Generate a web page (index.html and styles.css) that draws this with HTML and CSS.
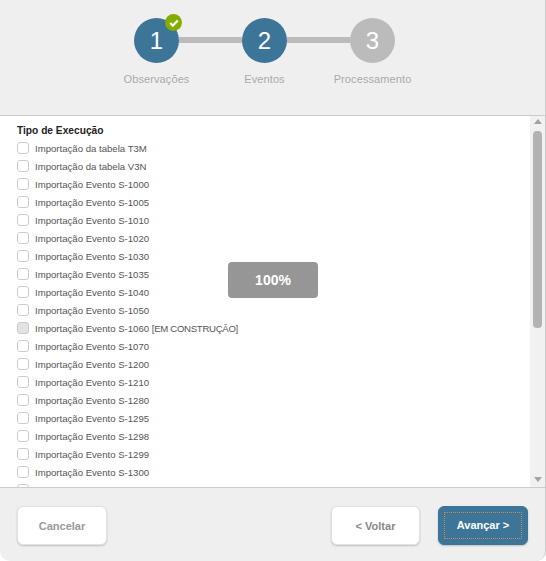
FILE: index.html
```html
<!DOCTYPE html>
<html lang="en">
<head>
    <meta charset="UTF-8">
    <meta name="viewport" content="width=device-width, initial-scale=1.0">
    <title>Tipo de Execução</title>
    <link rel="stylesheet" href="styles.css">
</head>
<body>
    <div class="wizard">
        <div class="steps">
            <div class="step done">
                <div class="circle">1
                    <span class="check">
                        <svg width="10" height="8" viewBox="0 0 10 8"><path d="M1.2 4l2.6 2.6L8.8 1.4" fill="none" stroke="#fff" stroke-width="2.2"/></svg>
                    </span>
                </div>
                <div class="label">Observações</div>
            </div>
            <div class="line"></div>
            <div class="step">
                <div class="circle">2</div>
                <div class="label">Eventos</div>
            </div>
            <div class="line"></div>
            <div class="step off">
                <div class="circle">3</div>
                <div class="label">Processamento</div>
            </div>
        </div>

        <div class="content">
            <div class="list">
                <div class="list-title">Tipo de Execução</div>
                <div class="item"><span class="box"></span>Importação da tabela T3M</div>
                <div class="item"><span class="box"></span>Importação da tabela V3N</div>
                <div class="item"><span class="box"></span>Importação Evento S-1000</div>
                <div class="item"><span class="box"></span>Importação Evento S-1005</div>
                <div class="item"><span class="box"></span>Importação Evento S-1010</div>
                <div class="item"><span class="box"></span>Importação Evento S-1020</div>
                <div class="item"><span class="box"></span>Importação Evento S-1030</div>
                <div class="item"><span class="box"></span>Importação Evento S-1035</div>
                <div class="item"><span class="box"></span>Importação Evento S-1040</div>
                <div class="item"><span class="box"></span>Importação Evento S-1050</div>
                <div class="item"><span class="box disabled"></span>Importação Evento S-1060&nbsp;<span class="note">[EM CONSTRUÇÃO]</span></div>
                <div class="item"><span class="box"></span>Importação Evento S-1070</div>
                <div class="item"><span class="box"></span>Importação Evento S-1200</div>
                <div class="item"><span class="box"></span>Importação Evento S-1210</div>
                <div class="item"><span class="box"></span>Importação Evento S-1280</div>
                <div class="item"><span class="box"></span>Importação Evento S-1295</div>
                <div class="item"><span class="box"></span>Importação Evento S-1298</div>
                <div class="item"><span class="box"></span>Importação Evento S-1299</div>
                <div class="item"><span class="box"></span>Importação Evento S-1300</div>
                <div class="item"><span class="box"></span>Importação Evento S-2190</div>
            </div>
            <div class="scrollbar">
                <span class="arrow up"></span>
                <div class="track"><div class="thumb"></div></div>
                <span class="arrow down"></span>
            </div>
            <div class="progress">100%</div>
        </div>

        <div class="footer">
            <button class="btn">Cancelar</button>
            <div class="footer-right">
                <button class="btn back">&lt; Voltar</button>
                <button class="btn next"><span class="focus">Avançar &gt;</span></button>
            </div>
        </div>
    </div>
</body>
</html>
```

FILE: styles.css
```css
html, body {
    margin: 0;
    padding: 0;
    background-color: #fff;
}
body {
    font-family: "Liberation Sans", Arial, sans-serif;
    width: 546px;
    height: 561px;
    overflow: hidden;
}
.wizard {
    width: 546px;
    height: 561px;
    box-sizing: border-box;
    background-color: #efefef;
    border-right: 1px solid #ccc;
    border-radius: 0 0 10px 10px;
    display: flex;
    flex-direction: column;
    overflow: hidden;
}
.steps {
    height: 115px;
    flex: none;
    display: flex;
    align-items: flex-start;
    padding: 18px 0 0 134px;
    box-sizing: border-box;
}
.step {
    width: 45px;
    flex: none;
    display: flex;
    flex-direction: column;
    align-items: center;
}
.circle {
    width: 45px;
    height: 45px;
    flex: none;
    border-radius: 50%;
    background-color: #3d7599;
    color: #fff;
    font-size: 24px;
    line-height: 45px;
    text-align: center;
    position: relative;
}
.off .circle {
    background-color: #bbb;
}
.check {
    position: absolute;
    top: -4px;
    right: -3px;
    width: 17px;
    height: 17px;
    border-radius: 50%;
    background-color: #84ad00;
    display: flex;
    align-items: center;
    justify-content: center;
}
.label {
    margin-top: 9px;
    font-size: 11px;
    letter-spacing: 0.1px;
    line-height: 14px;
    color: #aaa;
    white-space: nowrap;
}
.line {
    width: 63px;
    height: 6px;
    flex: none;
    margin-top: 19px;
    background-color: #bbb;
}
.content {
    flex: 1;
    min-height: 0;
    display: flex;
    position: relative;
    background-color: #fff;
    border-top: 1px solid #ccc;
    border-bottom: 1px solid #ccc;
}
.list {
    flex: 1;
    overflow: hidden;
    padding: 9px 0 0 17px;
}
.list-title {
    font-size: 10.2px;
    font-weight: bold;
    line-height: 12px;
    color: #222;
    margin-bottom: 2px;
}
.item {
    height: 18px;
    display: flex;
    align-items: center;
    font-size: 9.6px;
    color: #555;
    white-space: nowrap;
}
.note {
    letter-spacing: -0.3px;
}
.box {
    width: 10px;
    height: 10px;
    margin-right: 6px;
    border: 1px solid #ccc;
    border-radius: 3px;
    background-color: #fff;
    flex: none;
}
.box.disabled {
    background-color: #e3e3e3;
}
.scrollbar {
    width: 15px;
    flex: none;
    background-color: #f1f1f1;
    display: flex;
    flex-direction: column;
    align-items: center;
}
.arrow {
    width: 0;
    height: 0;
    border-left: 4px solid transparent;
    border-right: 4px solid transparent;
    flex: none;
}
.arrow.up {
    margin: 3px 0 7px;
    border-bottom: 5px solid #a3a3a3;
}
.arrow.down {
    margin: 7px 0 5px;
    border-top: 5px solid #a3a3a3;
}
.track {
    flex: 1;
    width: 100%;
}
.thumb {
    width: 9px;
    height: 197px;
    margin: 0 auto;
    border-radius: 4px;
    background-color: #b3b3b3;
}
.progress {
    position: absolute;
    left: 228px;
    top: 146px;
    width: 90px;
    height: 36px;
    border-radius: 4px;
    background-color: #969696;
    color: #fff;
    font-size: 14px;
    font-weight: bold;
    line-height: 36px;
    text-align: center;
}
.footer {
    height: 73px;
    flex: none;
    display: flex;
    justify-content: space-between;
    align-items: center;
    padding: 2px 17px 0;
    box-sizing: border-box;
}
.footer-right {
    display: flex;
    gap: 18px;
}
.btn {
    width: 90px;
    height: 39px;
    padding: 0;
    font-family: inherit;
    font-size: 11px;
    font-weight: bold;
    color: #999;
    background-color: #fff;
    border: 1px solid #e2e2e2;
    border-radius: 6px;
    box-shadow: 0 1px 2px rgba(0,0,0,0.2);
}
.back {
    width: 89px;
    color: #888;
}
.next {
    background-color: #3d7599;
    border-color: #3d7599;
    color: #fff;
    padding: 5px;
}
.focus {
    display: block;
    height: 100%;
    line-height: 24px;
    box-sizing: border-box;
    border: 1px dotted #c98a5a;
}
```
